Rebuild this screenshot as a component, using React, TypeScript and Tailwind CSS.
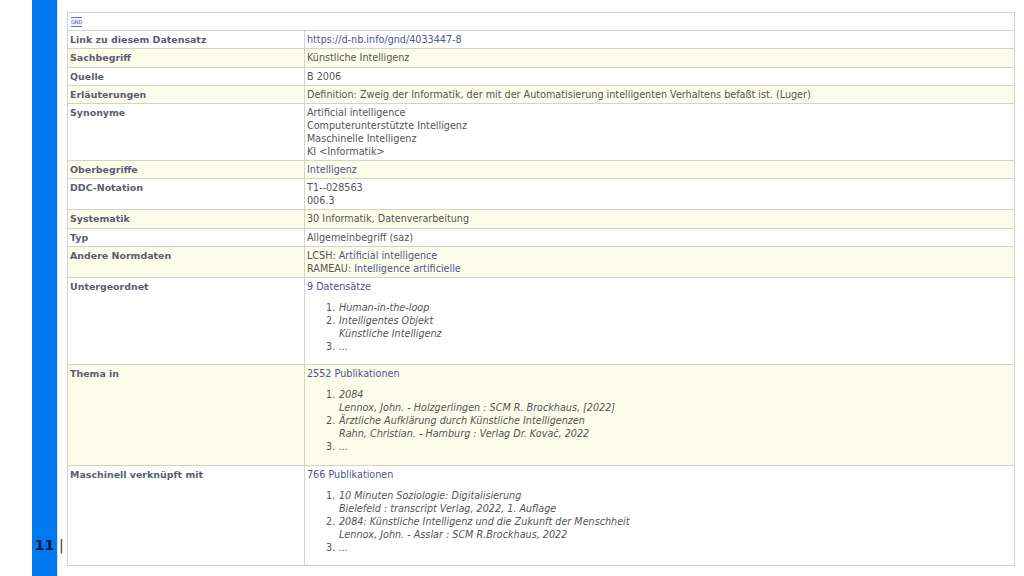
const link = "text-[#50558f]"

function Row({ label, tint, h, children }: { label: string; tint?: boolean; h: string; children: React.ReactNode }) {
  return (
    <div className={`flex border-b border-[#d4d4cc] ${h} ${tint ? "bg-[#fcfcea]" : "bg-white"}`}>
      <div className="w-[237px] shrink-0 border-r border-[#d4d4cc] pl-[2px] pt-[2px] text-[9.45px] font-bold text-[#5c5c70]">{label}</div>
      <div className="flex-1 pl-[2px] pt-[2px]">{children}</div>
    </div>
  )
}

function Hits({ count, items }: { count: string; items: string[][] }) {
  return (
    <>
      <div className={link}>{count}</div>
      <ol className="mt-[8px] ml-[19px] flex flex-col">
        {items.map((lines, i) => (
          <li key={i} className="flex">
            <span className="w-[13px] shrink-0 not-italic">{i + 1}.</span>
            <div className="italic">
              {lines.map((l) => (
                <div key={l}>{l}</div>
              ))}
            </div>
          </li>
        ))}
      </ol>
    </>
  )
}

export default function App() {
  return (
    <div className="flex h-[576px] w-[1024px] overflow-hidden bg-white font-['DejaVu_Sans',sans-serif] text-[9.65px] leading-[13px] text-[#555555]">
      <div className="ml-8 flex w-[25px] flex-col items-center justify-end bg-[#0078f0] pb-[22px]">
        <span className="text-[14px] leading-[17px] font-bold text-[#04163a]">11</span>
      </div>
      <div className="flex w-[10px] flex-col justify-end border-l border-[#cfe6fc] pb-[22px] pl-[1px]">
        <span className="text-[14px] leading-[17px] text-[#333]">|</span>
      </div>
      <div className="mt-3 flex h-[554px] w-[948px] flex-col border border-[#d4d4cc] border-b-[#cfcfc8]">
        <div className="flex h-[18px] items-center border-b border-[#d4d4cc] pl-[3px]">
          <span className="border-y border-[#6f78c0] bg-[#eef0fa] py-[1px] text-[5px] leading-[6px] text-[#5a64b0]">GND</span>
        </div>
        <Row label="Link zu diesem Datensatz" h="h-[18px]">
          <span className={link}>https://d-nb.info/gnd/4033447-8</span>
        </Row>
        <Row label="Sachbegriff" tint h="h-[19px]">
          Künstliche Intelligenz
        </Row>
        <Row label="Quelle" h="h-[18px]">
          B 2006
        </Row>
        <Row label="Erläuterungen" tint h="h-[18px]">
          Definition: Zweig der Informatik, der mit der Automatisierung intelligenten Verhaltens befaßt ist. (Luger)
        </Row>
        <Row label="Synonyme" h="h-[57px]">
          <div>Artificial intelligence</div>
          <div>Computerunterstützte Intelligenz</div>
          <div>Maschinelle Intelligenz</div>
          <div>KI &lt;Informatik&gt;</div>
        </Row>
        <Row label="Oberbegriffe" tint h="h-[18px]">
          <span className={link}>Intelligenz</span>
        </Row>
        <Row label="DDC-Notation" h="h-[31px]">
          <div>T1--028563</div>
          <div>006.3</div>
        </Row>
        <Row label="Systematik" tint h="h-[19px]">
          30 Informatik, Datenverarbeitung
        </Row>
        <Row label="Typ" h="h-[18px]">
          Allgemeinbegriff (saz)
        </Row>
        <Row label="Andere Normdaten" tint h="h-[31px]">
          <div>
            LCSH: <span className={link}>Artificial intelligence</span>
          </div>
          <div>
            RAMEAU: <span className={link}>Intelligence artificielle</span>
          </div>
        </Row>
        <Row label="Untergeordnet" h="h-[87px]">
          <Hits
            count="9 Datensätze"
            items={[["Human-in-the-loop"], ["Intelligentes Objekt", "Künstliche Intelligenz"], ["..."]]}
          />
        </Row>
        <Row label="Thema in" tint h="h-[101px]">
          <Hits
            count="2552 Publikationen"
            items={[
              ["2084", "Lennox, John. - Holzgerlingen : SCM R. Brockhaus, [2022]"],
              ["Ärztliche Aufklärung durch Künstliche Intelligenzen", "Rahn, Christian. - Hamburg : Verlag Dr. Kovač, 2022"],
              ["..."],
            ]}
          />
        </Row>
        <div className="flex flex-1 bg-white">
          <div className="w-[237px] shrink-0 border-r border-[#d4d4cc] pl-[2px] pt-[2px] text-[9.45px] font-bold text-[#5c5c70]">Maschinell verknüpft mit</div>
          <div className="flex-1 pl-[2px] pt-[2px]">
            <Hits
              count="766 Publikationen"
              items={[
                ["10 Minuten Soziologie: Digitalisierung", "Bielefeld : transcript Verlag, 2022, 1. Auflage"],
                ["2084: Künstliche Intelligenz und die Zukunft der Menschheit", "Lennox, John. - Asslar : SCM R.Brockhaus, 2022"],
                ["..."],
              ]}
            />
          </div>
        </div>
      </div>
    </div>
  )
}
